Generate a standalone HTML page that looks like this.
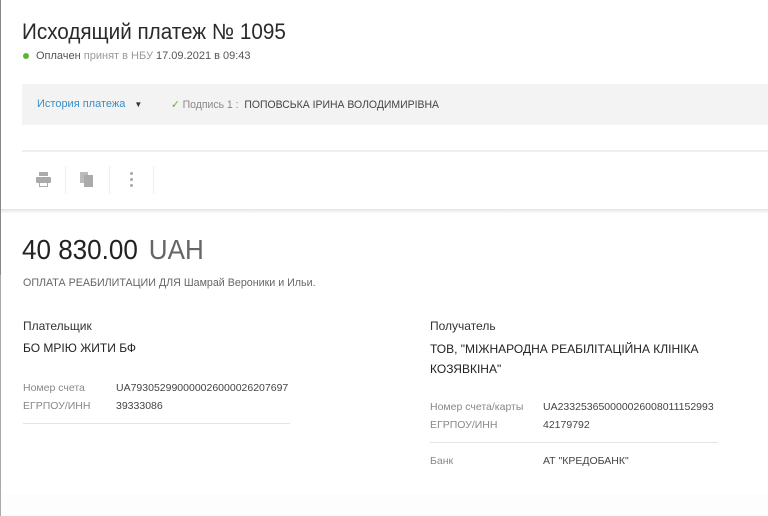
<!DOCTYPE html>
<html><head><meta charset="utf-8"><style>
*{margin:0;padding:0;box-sizing:border-box}
body{width:768px;height:516px;overflow:hidden;background:#fff;font-family:"Liberation Sans","DejaVu Sans",sans-serif;position:relative;color:#333}
.a{position:absolute;white-space:nowrap;transform-origin:0 0}
</style></head><body>
<div style="position:absolute;left:0;top:0;width:1px;height:275px;background:#888"></div>
<div style="position:absolute;left:0;top:275px;width:1px;height:241px;background:#aaa"></div>
<div class="a" style="left:22px;top:19px;font-size:22px;color:#2a2a2a;transform:scaleX(.94)">Исходящий платеж № 1095</div>
<div style="position:absolute;left:23px;top:53px;width:6px;height:6px;border-radius:50%;background:#5cb531"></div>
<div class="a" style="left:36px;top:50px;font-size:11px;color:#555">Оплачен <span style="color:#999">принят в НБУ</span> 17.09.2021 в 09:43</div>
<div style="position:absolute;left:22px;top:84px;width:746px;height:41px;background:#f3f3f3"></div>
<div class="a" style="left:37px;top:98px;font-size:11px;color:#3a8fc4">История платежа <span style="color:#333;font-size:8px;margin-left:6px">▼</span></div>
<div class="a" style="left:171px;top:98px;font-size:11px;color:#888;transform:scaleX(.95)"><span style="color:#5cb531">✓</span> Подпись 1 : &nbsp;<span style="color:#444">ПОПОВСЬКА ІРИНА ВОЛОДИМИРІВНА</span></div>
<div style="position:absolute;left:22px;top:150px;width:746px;height:2px;background:#eee"></div>
<svg style="position:absolute;left:36px;top:172px" width="15" height="15" viewBox="0 0 15 15"><rect x="3" y="0" width="9" height="4" fill="#aaa"/><rect x="0" y="5" width="15" height="6" rx="1" fill="#aaa"/><rect x="3" y="10" width="9" height="5" fill="#aaa"/><rect x="4" y="11" width="7" height="3" fill="#fff"/></svg>
<div style="position:absolute;left:65px;top:166px;width:1px;height:28px;background:#eee"></div>
<svg style="position:absolute;left:80px;top:172px" width="16" height="16" viewBox="0 0 16 16"><rect x="0" y="0" width="8" height="11" fill="#bbb"/><rect x="4" y="3" width="9" height="12" fill="#aaa"/></svg>
<div style="position:absolute;left:109px;top:166px;width:1px;height:28px;background:#eee"></div>
<div style="position:absolute;left:130px;top:172px;width:3px;height:3px;border-radius:50%;background:#aaa;box-shadow:0 6px 0 #aaa,0 12px 0 #aaa"></div>
<div style="position:absolute;left:153px;top:166px;width:1px;height:28px;background:#eee"></div>
<div style="position:absolute;left:1px;top:209px;width:767px;height:4px;background:linear-gradient(#e4e4e4,#fafafa)"></div>
<div class="a" style="left:22px;top:234px;font-size:28px;color:#222;transform:scaleX(.93)">40 830.00 <span style="color:#666;margin-left:4px">UAH</span></div>
<div class="a" style="left:23px;top:277px;font-size:10.7px;color:#666">ОПЛАТА РЕАБИЛИТАЦИИ ДЛЯ Шамрай Вероники и Ильи.</div>
<div class="a" style="left:23px;top:319px;font-size:12px;color:#333">Плательщик</div>
<div class="a" style="left:23px;top:341px;font-size:12px;color:#222">БО МРІЮ ЖИТИ БФ</div>
<div class="a" style="left:23px;top:382px;font-size:10.5px;color:#888">Номер счета</div>
<div class="a" style="left:116px;top:382px;font-size:10.5px;color:#444">UA793052990000026000026207697</div>
<div class="a" style="left:23px;top:400px;font-size:10.5px;color:#888">ЕГРПОУ/ИНН</div>
<div class="a" style="left:116px;top:400px;font-size:10.5px;color:#444">39333086</div>
<div style="position:absolute;left:23px;top:423px;width:267px;height:1px;background:#e4e4e4"></div>
<div class="a" style="left:430px;top:319px;font-size:12px;color:#333">Получатель</div>
<div class="a" style="left:430px;top:339px;font-size:12px;color:#222;line-height:20px">ТОВ, "МІЖНАРОДНА РЕАБІЛІТАЦІЙНА КЛІНІКА<br>КОЗЯВКІНА"</div>
<div class="a" style="left:430px;top:401px;font-size:10.5px;color:#888">Номер счета/карты</div>
<div class="a" style="left:543px;top:401px;font-size:10.5px;color:#444">UA233253650000026008011152993</div>
<div class="a" style="left:430px;top:419px;font-size:10.5px;color:#888">ЕГРПОУ/ИНН</div>
<div class="a" style="left:543px;top:419px;font-size:10.5px;color:#444">42179792</div>
<div style="position:absolute;left:430px;top:442px;width:288px;height:1px;background:#e4e4e4"></div>
<div class="a" style="left:430px;top:455px;font-size:10.5px;color:#888">Банк</div>
<div class="a" style="left:543px;top:455px;font-size:10.5px;color:#444">АТ "КРЕДОБАНК"</div>
<div style="position:absolute;left:1px;top:494px;width:767px;height:22px;background:#fdfdfd"></div>
</body></html>
